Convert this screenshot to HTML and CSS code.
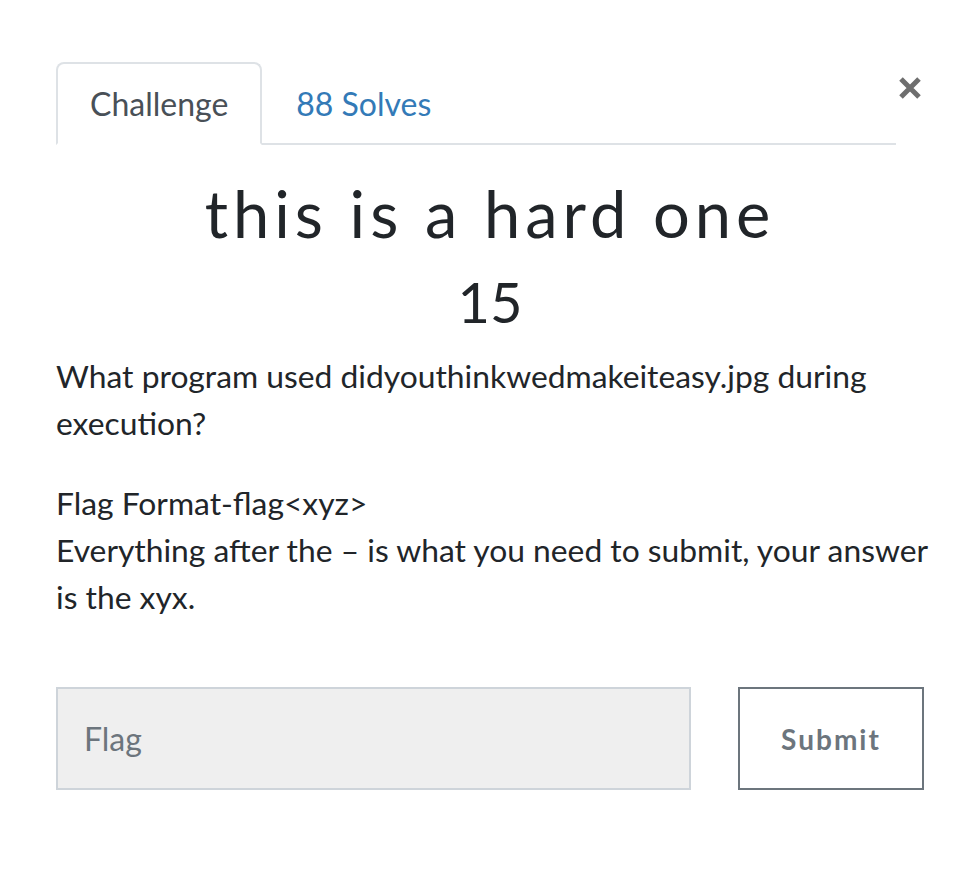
FILE: index.html
```html
<!DOCTYPE html>
<html>
<head>
  <meta charset="utf-8">
  <title>Challenge</title>
  <link rel="stylesheet" href="styles.css">
</head>
<body>
  <div class="modal-body">
    <div class="head">
      <ul class="nav-tabs">
        <li class="nav-item"><a href="#" class="nav-link active">Challenge</a></li>
        <li class="nav-item"><a href="#" class="nav-link">88 Solves</a></li>
      </ul>
      <button class="close" aria-label="Close">
        <svg width="24" height="22" viewBox="0 0 24 22"><path d="M3 2 L21 20 M21 2 L3 20" stroke="#6e6e6e" stroke-width="5" fill="none"/></svg>
      </button>
    </div>
    <div class="challenge">
      <h2 class="challenge-name">this is a hard one</h2>
      <h3 class="challenge-value">15</h3>
      <div class="challenge-desc">
        <p>What program used didyouthinkwedmakeiteasy.jpg during execution?</p>
        <p>Flag Format-flag&lt;xyz&gt;<br>Everything after the – is what you need to submit, your answer is the xyx.</p>
      </div>
      <form class="flag-row" onsubmit="return false">
        <input class="flag-input" type="text" placeholder="Flag">
        <button class="submit-btn" type="submit">Submit</button>
      </form>
    </div>
  </div>
</body>
</html>
```

FILE: styles.css
```css
body {
    margin: 0;
    background: #fff;
    font-family: Lato, "Liberation Sans", sans-serif;
    color: #212529;
}

.modal-body {
    padding: 62px 54px 0 56px;
}

.head {
    display: flex;
    align-items: flex-start;
}

.nav-tabs {
    flex: 1;
    display: flex;
    list-style: none;
    margin: 0;
    padding: 0;
    border-bottom: 2px solid #dee2e6;
}

.nav-item { margin-bottom: -2px; }

.nav-link {
    display: block;
    padding: 16px 32px;
    font-size: 32px;
    line-height: 47px;
    color: #337ab7;
    text-decoration: none;
    border: 2px solid transparent;
    border-radius: 8px 8px 0 0;
}

.nav-link.active {
    color: #495057;
    background: #fff;
    border-color: #dee2e6 #dee2e6 #fff;
}

.close {
    width: 28px;
    height: 28px;
    margin-top: 12px;
    padding: 0;
    border: 0;
    background: none;
    display: flex;
    align-items: center;
    justify-content: center;
}

.challenge-name {
    margin: 30px 0 0;
    text-align: center;
    font-family: Lato, sans-serif;
    font-weight: 400;
    font-size: 65px;
    line-height: 76px;
    letter-spacing: 5px;
}

.challenge-value {
    margin: 17px 0 0;
    text-align: center;
    font-weight: 400;
    font-size: 56px;
    line-height: 68px;
}

.challenge-desc {
    margin-top: 17px;
    margin-right: -6px;
    font-size: 31.8px;
    line-height: 47px;
}

.challenge-desc p { margin: 0 0 33px; }

.flag-row {
    display: flex;
    gap: 47px;
    margin-top: 66px;
}

.flag-input {
    flex: 1;
    height: 103px;
    box-sizing: border-box;
    padding: 0 26px;
    border: 2px solid #ced4da;
    background: #efefef;
    font-family: Lato, sans-serif;
    font-size: 32px;
    color: #495057;
}

.flag-input::placeholder { color: #6c757d; }

.submit-btn {
    width: 186px;
    height: 103px;
    border: 2px solid #6c757d;
    background: #fff;
    color: #6c757d;
    font-family: Lato, sans-serif;
    font-weight: 700;
    font-size: 28px;
    letter-spacing: 2px;
}
```
